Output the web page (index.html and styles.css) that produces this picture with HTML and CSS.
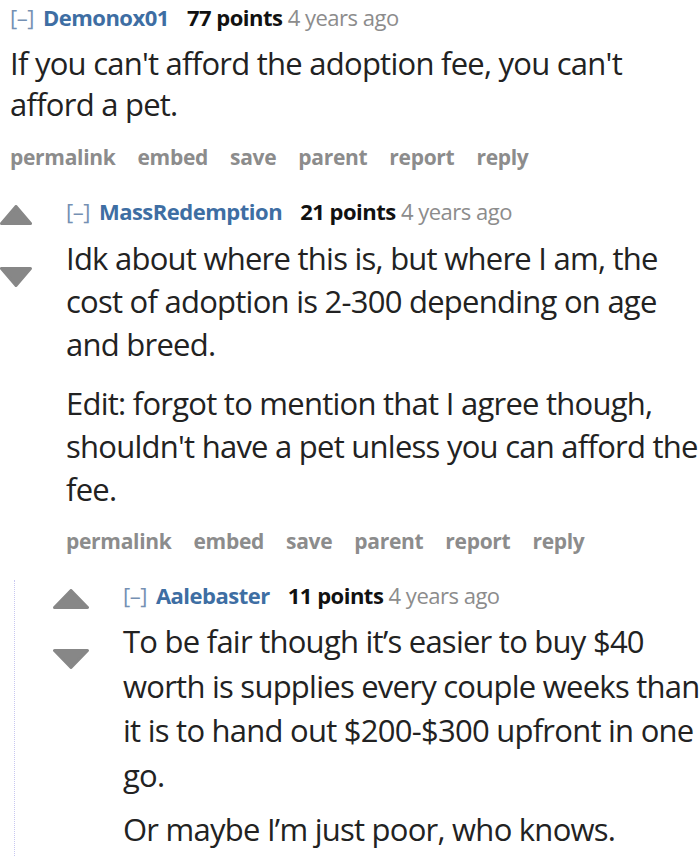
FILE: index.html
```html
<!DOCTYPE html>
<html>
<head>
<meta charset="utf-8">
<link rel="stylesheet" href="styles.css">
</head>
<body>
<div class="thread">
  <div class="comment c1">
    <div class="tagline"><span class="expand">[–]</span><span class="author">Demonox01</span><span class="score">77 points</span> <span class="time">4 years ago</span></div>
    <div class="md"><p>If you can't afford the adoption fee, you can't afford a pet.</p></div>
    <ul class="buttons"><li>permalink</li><li>embed</li><li>save</li><li>parent</li><li>report</li><li>reply</li></ul>
  </div>

  <div class="comment c2">
    <div class="midcol">
      <svg class="arrow up" viewBox="0 0 32 20"><polygon points="16,1.5 30.5,18.5 1.5,18.5"/></svg>
      <svg class="arrow down" viewBox="0 0 32 20"><polygon points="1.5,1.5 30.5,1.5 16,18.5"/></svg>
    </div>
    <div class="entry">
      <div class="tagline"><span class="expand">[–]</span><span class="author">MassRedemption</span><span class="score">21 points</span> <span class="time">4 years ago</span></div>
      <div class="md">
        <p>Idk about where this is, but where I am, the cost of adoption is 2-300 depending on age and breed.</p>
        <p>Edit: forgot to mention that I agree though, shouldn't have a pet unless you can afford the fee.</p>
      </div>
      <ul class="buttons"><li>permalink</li><li>embed</li><li>save</li><li>parent</li><li>report</li><li>reply</li></ul>
    </div>
  </div>

  <div class="child">
    <div class="comment c3">
      <div class="midcol">
        <svg class="arrow up" viewBox="0 0 36 20"><polygon points="18,1.5 34.5,18.5 1.5,18.5"/></svg>
        <svg class="arrow down" viewBox="0 0 36 20"><polygon points="1.5,1.5 34.5,1.5 18,18.5"/></svg>
      </div>
      <div class="entry">
        <div class="tagline"><span class="expand">[–]</span><span class="author">Aalebaster</span><span class="score">11 points</span> <span class="time">4 years ago</span></div>
        <div class="md">
          <p>To be fair though it’s easier to buy $40 worth is supplies every couple weeks than it is to hand out $200-$300 upfront in one go.</p>
          <p>Or maybe I’m just poor, who knows.</p>
        </div>
      </div>
    </div>
  </div>
</div>
</body>
</html>
```

FILE: styles.css
```css
html, body {
  margin: 0;
  padding: 0;
  background: #ffffff;
}
body {
  font-family: "Open Sans", "Noto Sans", sans-serif;
  color: #222222;
  width: 700px;
  height: 856px;
  overflow: hidden;
}
.thread {
  padding-top: 2px;
}
.tagline {
  font-size: 22px;
  line-height: 30px;
  white-space: nowrap;
  letter-spacing: -0.5px;
}
.expand {
  color: #7590b3;
  font-weight: 400;
  margin-right: 9px;
}
.author {
  color: #3e6ea3;
  font-weight: 700;
  margin-right: 18px;
}
.score {
  color: #111;
  font-weight: 700;
}
.time {
  color: #8c8c8c;
}
.md p {
  margin: 0;
  font-size: 31px;
  line-height: 43px;
  letter-spacing: -0.75px;
}
.md p + p {
  margin-top: 16px;
}
.buttons {
  list-style: none;
  margin: 0;
  padding: 0;
  display: flex;
  gap: 22px;
  font-size: 21px;
  line-height: 30px;
  font-weight: 700;
  color: #8c8c8c;
  letter-spacing: -0.3px;
}
.c1 {
  padding-left: 10px;
}
.c1 .md {
  margin-top: 11px;
}
.c1 .md p {
  line-height: 41px;
}
.c1 .buttons {
  margin-top: 17px;
}
.c2 {
  display: flex;
  margin-top: 24px;
}
.midcol {
  flex: none;
  display: flex;
  flex-direction: column;
}
.c2 .midcol {
  width: 66px;
  padding-top: 9px;
}
.arrow {
  display: block;
  fill: #878787;
  stroke: #878787;
  stroke-width: 3;
  stroke-linejoin: round;
}
.c2 .arrow {
  width: 32px;
  height: 20px;
}
.c2 .arrow.down {
  margin-top: 42px;
}
.entry {
  flex: none;
}
.c2 .entry {
  width: 634px;
}
.entry .md {
  margin-top: 11px;
}
.c2 .buttons {
  margin-top: 15px;
}
.child {
  margin-left: 14px;
  margin-top: 24px;
  border-left: 1px dotted #c8c8f0;
  padding-left: 38px;
  padding-bottom: 4px;
}
.c3 {
  display: flex;
}
.c3 .midcol {
  width: 69px;
  padding-top: 9px;
}
.c3 .arrow {
  width: 36px;
  height: 20px;
}
.c3 .arrow.down {
  margin-top: 40px;
}
.c3 .entry {
  width: 578px;
  padding-left: 1px;
}
.c3 .md {
  margin-top: 9px;
}
.c3 .md p {
  line-height: 44.5px;
}
.c3 .md p + p {
  margin-top: 10px;
}
```
